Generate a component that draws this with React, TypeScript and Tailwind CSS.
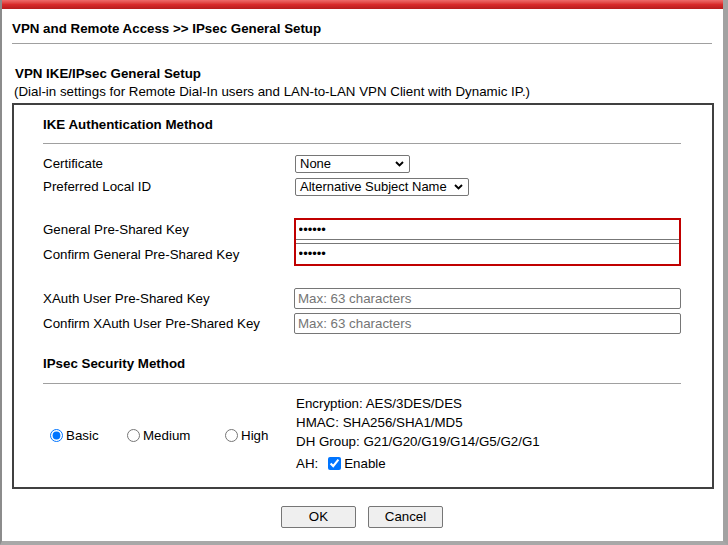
import React from 'react';

const Chevron = () => (
  <svg width="9" height="6" viewBox="0 0 9 6" className="shrink-0">
    <polyline points="1,1 4.5,4.5 8,1" fill="none" stroke="#000" strokeWidth="1.9" />
  </svg>
);

const FakeSelect: React.FC<{ value: string; width: string }> = ({ value, width }) => (
  <div className={`${width} h-[18px] flex items-center justify-between border border-[#767676] rounded-[2px] pl-[4px] pr-[5px] leading-[16px] bg-white text-[13px]`}>
    <span>{value}</span>
    <Chevron />
  </div>
);

const Radio: React.FC<{ label: string; checked?: boolean; width?: string }> = ({ label, checked, width = '' }) => (
  <label className={`flex items-center ${width}`}>
    <input type="radio" name="sec" defaultChecked={checked} className="w-[13px] h-[13px] m-0" />
    <span className="ml-[3px]">{label}</span>
  </label>
);

export default function App() {
  return (
    <div className="w-[728px] h-[545px] bg-white flex flex-col border-l-2 border-l-[#8c8c8c] border-r-[5px] border-r-[#a2a2a2] border-b-[4px] border-b-[#a8a8a8] font-['Liberation_Sans',Arial,sans-serif] text-[13.333px] text-black overflow-hidden">
      {/* top bar */}
      <div className="h-[9px] shrink-0 bg-gradient-to-b from-[#ee6a6a] via-[#d92a2a] to-[#b51d1d]" />

      <div className="flex flex-col pl-[10px] pr-[11px]">
        <div className="mt-[12px] leading-[16px] pb-[6px] border-b border-[#a0a0a0] font-bold w-[700px]">
          VPN and Remote Access &gt;&gt; IPsec General Setup
        </div>

        <div className="mt-[21px] leading-[18px] font-bold pl-[3px]">VPN IKE/IPsec General Setup</div>
        <div className="leading-[18px] pl-[2px]">(Dial-in settings for Remote Dial-In users and LAN-to-LAN VPN Client with Dynamic IP.)</div>

        <div className="mt-[2px] w-[702px] border-2 border-[#404040] pl-[29px] pr-[31px] pb-[12px]">
          {/* IKE */}
          <div className="mt-[12px] leading-[16px] pb-[10px] border-b border-[#a0a0a0] font-bold">IKE Authentication Method</div>

          <div className="mt-[8px] flex flex-col">
            <div className="h-[23px] flex items-center">
              <div className="w-[251px]">Certificate</div>
              <div className="ml-[1px]"><FakeSelect value="None" width="w-[115px]" /></div>
            </div>
            <div className="h-[23px] flex items-center">
              <div className="w-[251px]">Preferred Local ID</div>
              <div className="ml-[1px]"><FakeSelect value="Alternative Subject Name" width="w-[174px]" /></div>
            </div>
          </div>

          <div className="mt-[20px] flex">
            <div className="w-[251px] flex flex-col gap-[2px]">
              <div className="h-[23px] flex items-center">General Pre-Shared Key</div>
              <div className="h-[23px] flex items-center">Confirm General Pre-Shared Key</div>
            </div>
            <div className="w-[388px] border-2 border-[#c00000] flex flex-col">
              <input type="password" defaultValue="aaaaaa" readOnly className="h-[20px] px-[3px] border-b border-[#777] outline-none text-[13px]" />
              <div className="h-[3px]" />
              <input type="password" defaultValue="aaaaaa" readOnly className="h-[20px] px-[3px] border-t border-[#777] outline-none text-[13px]" />
            </div>
          </div>

          <div className="mt-[22px] flex flex-col gap-[4px]">
            <div className="h-[21px] flex items-center">
              <div className="w-[251px]">XAuth User Pre-Shared Key</div>
              <input placeholder="Max: 63 characters" className="w-[387px] h-[21px] border border-[#767676] rounded-[2px] px-[3px] placeholder:text-[#757575] outline-none" />
            </div>
            <div className="h-[21px] flex items-center">
              <div className="w-[251px]">Confirm XAuth User Pre-Shared Key</div>
              <input placeholder="Max: 63 characters" className="w-[387px] h-[21px] border border-[#767676] rounded-[2px] px-[3px] placeholder:text-[#757575] outline-none" />
            </div>
          </div>

          {/* IPsec */}
          <div className="mt-[22px] leading-[16px] pb-[11px] border-b border-[#a0a0a0] font-bold">IPsec Security Method</div>

          <div className="flex">
            <div className="w-[253px] flex items-center pl-[7px] pt-[12px]">
              <Radio label="Basic" checked width="w-[77px]" />
              <Radio label="Medium" width="w-[98px]" />
              <Radio label="High" />
            </div>
            <div className="pt-[10px] flex flex-col">
              <div className="leading-[19px]">Encryption: AES/3DES/DES</div>
              <div className="leading-[19px]">HMAC: SHA256/SHA1/MD5</div>
              <div className="leading-[19px]">DH Group: G21/G20/G19/G14/G5/G2/G1</div>
              <div className="mt-[1px] h-[23px] flex items-center">
                <span>AH:</span>
                <input type="checkbox" defaultChecked className="ml-[10px] w-[13px] h-[13px]" />
                <span className="ml-[3px]">Enable</span>
              </div>
            </div>
          </div>
        </div>

        <div className="mt-[17px] flex justify-center gap-[12px] w-[700px]">
          <button className="w-[75px] h-[22px] border border-[#767676] bg-[#efefef] rounded-[2px] leading-[18px]">OK</button>
          <button className="w-[75px] h-[22px] border border-[#767676] bg-[#efefef] rounded-[2px] leading-[18px]">Cancel</button>
        </div>
      </div>
    </div>
  );
}
